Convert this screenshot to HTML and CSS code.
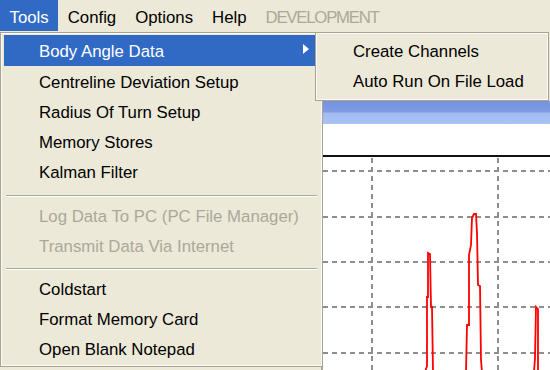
FILE: index.html
```html
<!DOCTYPE html>
<html>
<head>
<meta charset="utf-8">
<link rel="stylesheet" href="styles.css">
</head>
<body>
<div class="screen">
  <div class="menubar">
    <span class="bar-item active">Tools</span>
    <span class="bar-item">Config</span>
    <span class="bar-item">Options</span>
    <span class="bar-item">Help</span>
    <span class="bar-item disabled dev">DEVELOPMENT</span>
  </div>

  <div class="workspace">
    <div class="child">
      <div class="titlebar"></div>
      <div class="chart">
        <svg class="plot" width="227" height="246" viewBox="323 124 227 246">
          <line x1="323" y1="156" x2="550" y2="156" stroke="#111" stroke-width="2"/>
          <g stroke="#8e8e8e" stroke-width="2" stroke-dasharray="5 4" fill="none">
            <line x1="323" y1="171" x2="550" y2="171"/>
            <line x1="323" y1="217" x2="550" y2="217"/>
            <line x1="323" y1="262" x2="550" y2="262"/>
            <line x1="323" y1="307" x2="550" y2="307"/>
            <line x1="323" y1="353" x2="550" y2="353"/>
            <line x1="372" y1="158" x2="372" y2="370"/>
            <line x1="498" y1="158" x2="498" y2="370"/>
          </g>
          <g stroke="#ff0000" stroke-width="1.8" fill="none" stroke-linejoin="miter">
            <polyline points="425,372 427,366 427,297 428,297 428,253 430,254 431,307 432,307 433,372"/>
            <polyline points="466,372 467,325 469,325 469,255 471,245 472,218 474,214 476,214 477,233 478,285 480,286 481,360 482,372"/>
            <polyline points="534,372 535,358 536,307 538,309 538,372"/>
          </g>
        </svg>
      </div>
    </div>
  </div>

  <div class="menu main-menu">
    <div class="item selected first">Body Angle Data<span class="arrow"></span></div>
    <div class="item">Centreline Deviation Setup</div>
    <div class="item">Radius Of Turn Setup</div>
    <div class="item">Memory Stores</div>
    <div class="item">Kalman Filter</div>
    <div class="sep"></div>
    <div class="item disabled">Log Data To PC (PC File Manager)</div>
    <div class="item disabled">Transmit Data Via Internet</div>
    <div class="sep short"></div>
    <div class="item">Coldstart</div>
    <div class="item">Format Memory Card</div>
    <div class="item">Open Blank Notepad</div>
  </div>

  <div class="menu sub-menu">
    <div class="item sub">Create Channels</div>
    <div class="item sub">Auto Run On File Load</div>
  </div>
</div>
</body>
</html>
```

FILE: styles.css
```css
html, body {
  margin: 0;
  padding: 0;
}

body {
  background: #ece9d8;
  font-family: "Liberation Sans", Arial, sans-serif;
  font-size: 16.8px;
  color: #000;
}

.screen {
  position: relative;
  width: 550px;
  height: 370px;
  overflow: hidden;
  background: #ece9d8;
}

/* menu bar */
.menubar {
  display: flex;
  height: 31px;
}

.bar-item {
  display: block;
  height: 31px;
  box-sizing: border-box;
  padding: 4px 9.5px 0 9.5px;
  line-height: 27px;
  color: #000;
  white-space: nowrap;
}

.bar-item.active {
  background: #316ac5;
  color: #fff;
}

.bar-item.disabled {
  color: #aca899;
}

.bar-item.dev {
  letter-spacing: -1.25px;
}

/* background MDI child window */
.workspace {
  display: flex;
  height: 339px;
  box-sizing: border-box;
  padding: 70px 0 0 321px;
}

.child {
  flex: 1;
  display: flex;
  flex-direction: column;
  border-left: 2px solid #aca899;
}

.titlebar {
  height: 23px;
  background: linear-gradient(#7793df 0%, #7d9ae3 45%, #a3bcf1 55%, #aac3f4 100%);
}

.chart {
  flex: 1;
  background: #fff;
}

.plot {
  display: block;
}

/* drop-down menus */
.menu {
  position: absolute;
  box-sizing: border-box;
  background: #ece9d8;
  border: 1px solid #a7a390;
  box-shadow: inset 0 0 0 1px #fbfaf6;
  padding: 3px;
}

.main-menu {
  left: 0;
  top: 32px;
  width: 323px;
  padding-top: 2px;
  padding-bottom: 2px;
}

.sub-menu {
  left: 315px;
  top: 32px;
  width: 234px;
  height: 69px;
}

.item {
  position: relative;
  height: 30px;
  box-sizing: border-box;
  padding: 1px 0 0 35px;
  line-height: 29px;
  white-space: nowrap;
  color: #000;
}

.item.first {
  height: 31px;
  padding-top: 2px;
  margin-bottom: 1px;
}

.item.sub {
  padding-left: 34px;
}

.item.selected {
  background: #316ac5;
  color: #fff;
}

.item.disabled {
  color: #aca899;
}

.arrow {
  position: absolute;
  left: 299px;
  top: 9px;
  width: 0;
  height: 0;
  border-top: 5px solid transparent;
  border-bottom: 5px solid transparent;
  border-left: 6px solid #fff;
}

.sep {
  height: 14px;
  box-sizing: border-box;
  padding-top: 8px;
  margin: 0 2px;
}

.sep.short {
  height: 13px;
  padding-top: 7px;
}

.sep::before {
  content: "";
  display: block;
  height: 1px;
  background: #aca899;
  border-bottom: 1px solid #fff;
}
```
